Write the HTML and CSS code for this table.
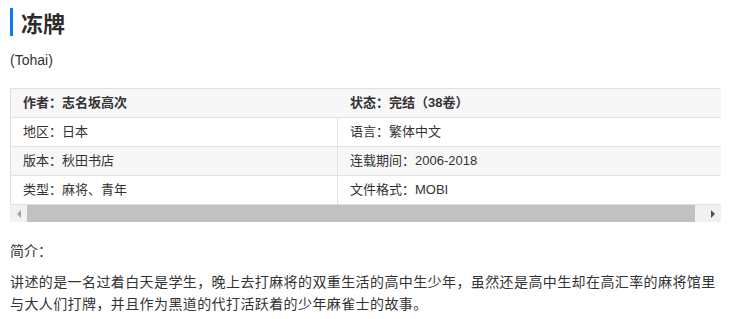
FILE: index.html
```html
<!DOCTYPE html>
<html lang="zh">
<head>
<meta charset="utf-8">
<title>冻牌</title>
<link rel="stylesheet" href="styles.css">
</head>
<body>
<h2 class="title">冻牌</h2>
<p class="alt">(Tohai)</p>
<div class="table-wrap">
  <table class="info">
    <tr class="head">
      <th class="c1">作者：志名坂高次</th>
      <th>状态：完结（38卷）</th>
    </tr>
    <tr>
      <td class="c1">地区：日本</td>
      <td>语言：繁体中文</td>
    </tr>
    <tr class="alt-row">
      <td class="c1">版本：秋田书店</td>
      <td>连载期间：2006-2018</td>
    </tr>
    <tr>
      <td class="c1">类型：麻将、青年</td>
      <td>文件格式：MOBI</td>
    </tr>
  </table>
</div>
<div class="hscroll">
  <div class="btn"><span class="arr left"></span></div>
  <div class="track"><div class="thumb"></div></div>
  <div class="btn"><span class="arr right"></span></div>
</div>
<p class="label">简介：</p>
<p class="desc">讲述的是一名过着白天是学生，晚上去打麻将的双重生活的高中生少年，虽然还是高中生却在高汇率的麻将馆里与大人们打牌，并且作为黑道的代打活跃着的少年麻雀士的故事。</p>
</body>
</html>
```

FILE: styles.css
```css
html, body {
  margin: 0;
  background: #fff;
}
body {
  padding: 8px 11px 0 10px;
  font-family: "Liberation Sans", "Noto Sans CJK SC", sans-serif;
  color: #333;
  font-size: 14px;
}
.title {
  margin: 0;
  height: 28px;
  line-height: 28px;
  font-size: 22px;
  font-weight: bold;
  color: #2b2b2b;
  border-left: 3px solid #0a7cf5;
  padding-left: 8px;
  font-family: "Noto Sans CJK SC", sans-serif;
}
.alt {
  margin: 14px 0 0;
  line-height: 20px;
  font-size: 14px;
}
.table-wrap {
  margin-top: 18px;
  width: 711px;
  overflow: hidden;
}
.info {
  width: 721px;
  border-collapse: separate;
  border-spacing: 0;
  border-top: 1px solid #e0e0e0;
  border-left: 1px solid #e0e0e0;
  font-size: 13px;
}
.info th, .info td {
  padding: 0 12px;
  height: 28px;
  line-height: 28px;
  text-align: left;
  border-bottom: 1px solid #e0e0e0;
  white-space: nowrap;
  color: #333;
}
.info th {
  font-weight: bold;
}
.info .c1 {
  width: 327px;
  box-sizing: border-box;
  border-right: 1px solid #e0e0e0;
}
.info .head th.c1 {
  border-right-color: transparent;
}
.head, .alt-row {
  background: #f7f7f7;
}
.hscroll {
  width: 711px;
  height: 17px;
  display: flex;
  background: #f1f1f1;
}
.btn {
  width: 17px;
  height: 17px;
  display: flex;
  align-items: center;
  justify-content: center;
}
.track {
  flex: 1;
  display: flex;
  align-items: stretch;
}
.thumb {
  width: 668px;
  background: #c1c1c1;
}
.arr {
  width: 0;
  height: 0;
  border-top: 4px solid transparent;
  border-bottom: 4px solid transparent;
}
.arr.left {
  border-right: 4px solid #a3a3a3;
}
.arr.right {
  border-left: 4px solid #505050;
}
.label {
  margin: 17px 0 0;
  line-height: 22px;
  font-size: 14px;
  font-family: "Noto Sans CJK SC", sans-serif;
}
.desc {
  margin: 9px 0 0;
  line-height: 22px;
  font-size: 14px;
  letter-spacing: 0.4px;
  font-family: "Noto Sans CJK SC", sans-serif;
}
```
